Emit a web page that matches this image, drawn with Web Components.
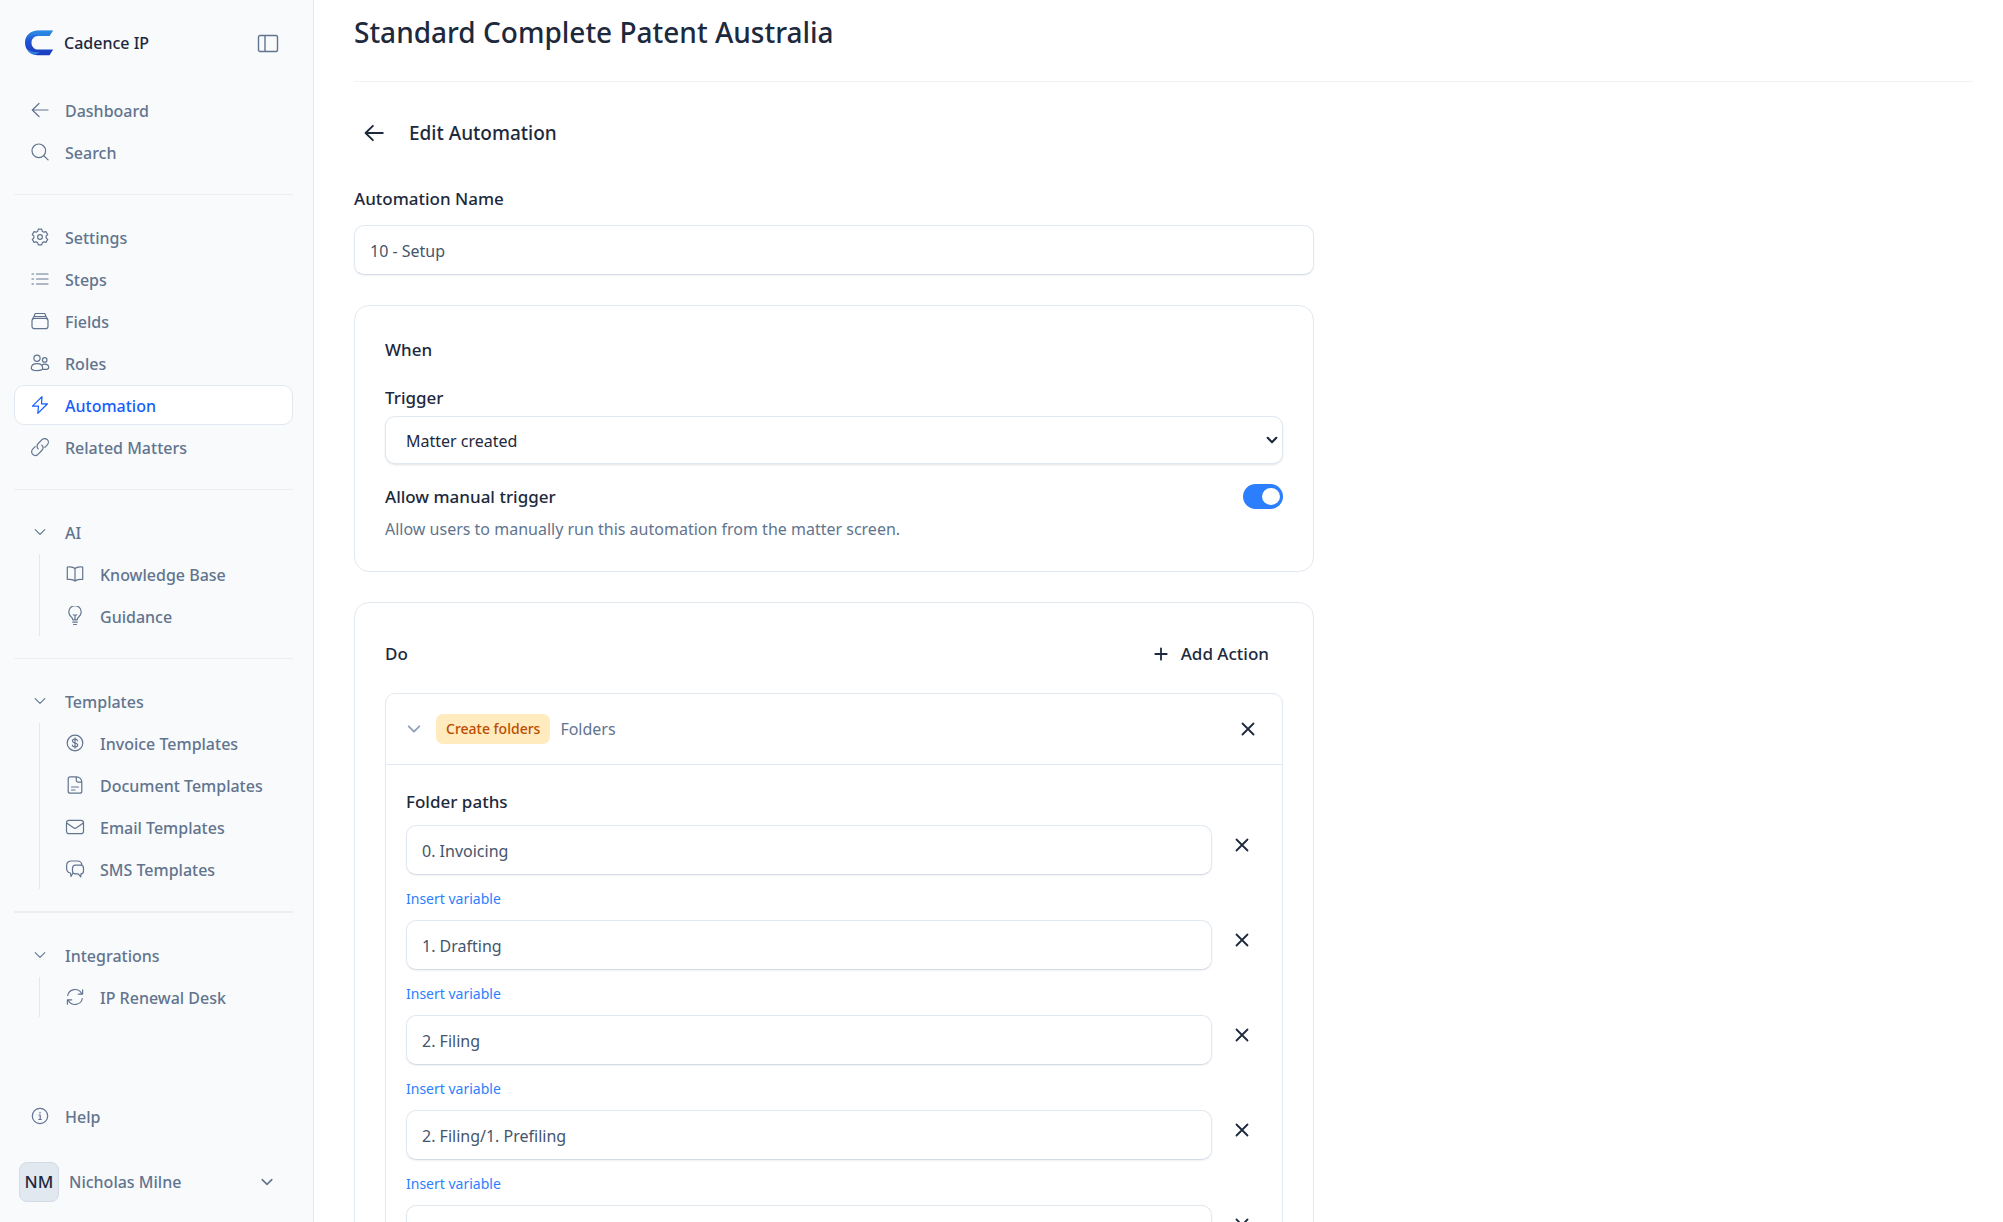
<!DOCTYPE html>
<html lang="en">
<head>
<meta charset="utf-8">
<meta name="viewport" content="width=device-width, initial-scale=1">
<title>Cadence IP</title>
<style>
  html, body { height: 100%; }
  body {
    margin: 0;
    overflow: hidden;
    font: 400 16px/24px "Noto Sans", "Open Sans", sans-serif;
    color: #1d293d;
    background: #fff;
    --line: #e2e8f0;
    --muted: #62748e;
    --blue: #155dfc;
  }
</style>
</head>
<body>
<app-shell>
  <side-bar slot="nav">
    <nav-group>
      <nav-item icon="left">Dashboard</nav-item>
      <nav-item icon="search">Search</nav-item>
    </nav-group>
    <nav-group>
      <nav-item icon="gear">Settings</nav-item>
      <nav-item icon="list">Steps</nav-item>
      <nav-item icon="stack">Fields</nav-item>
      <nav-item icon="users">Roles</nav-item>
      <nav-item icon="bolt" active>Automation</nav-item>
      <nav-item icon="link">Related Matters</nav-item>
    </nav-group>
    <nav-group label="AI">
      <nav-item icon="book">Knowledge Base</nav-item>
      <nav-item icon="bulb">Guidance</nav-item>
    </nav-group>
    <nav-group label="Templates">
      <nav-item icon="dollar">Invoice Templates</nav-item>
      <nav-item icon="doc">Document Templates</nav-item>
      <nav-item icon="mail">Email Templates</nav-item>
      <nav-item icon="chat">SMS Templates</nav-item>
    </nav-group>
    <nav-group label="Integrations" thick>
      <nav-item icon="sync">IP Renewal Desk</nav-item>
    </nav-group>
    <nav-item slot="foot" icon="info">Help</nav-item>
    <user-menu slot="foot" initials="NM">Nicholas Milne</user-menu>
  </side-bar>

  <page-header>Standard Complete Patent Australia</page-header>
  <automation-form>
    <text-field label="Automation Name" value="10 - Setup"></text-field>
    <trigger-card></trigger-card>
    <actions-card>
      <action-panel kind="Create folders" name="Folders">
        <folder-path value="0. Invoicing"></folder-path>
        <folder-path value="1. Drafting"></folder-path>
        <folder-path value="2. Filing"></folder-path>
        <folder-path value="2. Filing/1. Prefiling"></folder-path>
        <folder-path value=""></folder-path>
      </action-panel>
    </actions-card>
  </automation-form>
</app-shell>

<script>
const ICONS = {
  left: '<path d="M18 10H2.5M9 3.5 2.3 10 9 16.5"/>',
  search: '<circle cx="8.8" cy="8.8" r="6.8"/><path d="m13.7 13.7 4.4 4.2"/>',
  gear: '<circle cx="10" cy="10" r="2.4"/><path d="M8.3 2.2h3.4l.6 2.1 1.5.9 2.1-.6 1.8 2.9-1.6 1.6v1.8l1.6 1.6-1.8 2.9-2.1-.6-1.5.9-.6 2.1H8.3l-.6-2.1-1.5-.9-2.1.6-1.8-2.9 1.6-1.6V9.1L2.3 7.5l1.8-2.9 2.1.6 1.5-.9z"/>',
  list: '<path d="M6.5 5H18M6.5 10H18M6.5 15H18"/><path d="M2 5h1.500M2 10h1.500M2 15h1.500"/>',
  stack: '<rect x="2" y="7.300" width="16" height="10.400" rx="2.500"/><path d="M2.500 8 4 5.500h12L17.500 8M4 5.500 5.200 2.500h9.600L16 5.500"/>',
  users: '<circle cx="7" cy="5.300" r="3.100"/><circle cx="14.700" cy="6.900" r="2.300"/><path d="M1.300 15.300c0-3 2.400-4.600 5.700-4.600s5.700 1.600 5.700 4.600c0 1.500-2.600 2.300-5.700 2.300s-5.700-.8-5.700-2.300ZM12 11.900c.7-.5 1.600-.7 2.700-.7 2.300 0 4 1.200 4 3.200 0 1.300-1.800 2-4 2-.8 0-1.500-.1-2.100-.2"/>',
  bolt: '<path d="M12 1.600 2.500 11.200h6L7.800 18.400l9.700-9.600h-6z"/>',
  link: '<path d="M8.200 11.900c-1.600-1.600-1.500-3.900 0-5.400l3.800-3.800c1.600-1.600 3.900-1.500 5.300-.1s1.500 3.700 0 5.200l-2.500 2.500M11.800 8.100c1.600 1.600 1.500 3.900 0 5.400L8 17.300c-1.600 1.600-3.900 1.500-5.300.1s-1.500-3.700 0-5.200l2.500-2.500"/>',
  book: '<path d="M10 4.500C8.500 3 5.500 2.500 2.300 3v12.500c3.200-.5 6.200 0 7.700 1.500 1.500-1.500 4.500-2 7.700-1.500V3C14.500 2.500 11.500 3 10 4.500ZM10 4.500V17"/>',
  bulb: '<path d="M7.800 13.800c0-1.300-.7-2-1.800-3.100a6.200 6.200 0 1 1 8 0c-1.100 1.100-1.800 1.800-1.800 3.100zM10 13.500V9M8.300 8.800 10 9.500l1.700-.7M7.800 16.200h4.400M8.600 18.500h2.800"/>',
  dollar: '<circle cx="10" cy="10" r="7.800"/><path d="M12.600 7.800c-.3-1-1.300-1.600-2.600-1.600-1.500 0-2.600.7-2.600 1.900 0 2.700 5.300 1.200 5.300 3.900 0 1.200-1.200 1.900-2.700 1.900-1.400 0-2.500-.6-2.700-1.700M10 4.800v10.400"/>',
  doc: '<path d="M11.500 1.800H5.200c-1.200 0-2 .8-2 2v12.400c0 1.200.8 2 2 2h9.600c1.200 0 2-.8 2-2V7.100c0-3-2.300-5.300-5.300-5.300ZM11.300 1.900v3.300c0 1.200.8 2 2 2h3.300M6.500 12h7M6.500 15h3.500"/>',
  mail: '<rect x="1.500" y="3.300" width="17" height="13.400" rx="2.500"/><path d="m2 6.300 6.500 4.500c.9.600 2.100.6 3 0L18 6.300"/>',
  chat: '<path d="M7.800 14.300 6 17.500 5.500 14C3 13.800 1.600 12.200 1.600 9V7c0-3.300 1.600-5 4.800-5h5.800c2.800 0 4.500 1.300 4.700 4M10.500 6.200h5c2 0 3 1 3 3v2.700c0 1.800-.8 2.800-2.500 3l-.3 3-2.500-3h-2.700c-2 0-3-1-3-3V9.200c0-2 1-3 3-3Z"/>',
  sync: '<path d="M2.700 8.500A7.500 7.500 0 0 1 16.500 6.200M17.600 2.800v4.300h-4.300M17.300 11.500A7.500 7.500 0 0 1 3.500 13.800M2.400 17.200v-4.300h4.300"/>',
  info: '<circle cx="10" cy="10" r="7.700"/><path d="M9 9h1.200v4.500M8.800 13.500h2.500M10 6.300v.6"/>',
  down: '<path d="m5.200 7.600 4.800 4.800 4.800-4.800"/>',
  panel: '<rect x="1.500" y="1.500" width="19" height="16" rx="1.500"/><path d="M8 1.500v16"/>',
  cross: '<path d="m4.500 4.500 11 11M15.500 4.500l-11 11"/>',
  plus: '<path d="M10 4.300v11.400M4.300 10h11.400"/>'
};
const icon = (name, size = 20, width = 1.2) =>
  `<svg aria-hidden="true" width="${size}" height="${size}" viewBox="0 0 20 20" fill="none" stroke="currentColor" stroke-width="${width}" stroke-linecap="round" stroke-linejoin="round">${ICONS[name]}</svg>`;

const BASE = `
  :host, *, *::before, :host::before { box-sizing: border-box; }
  :host { display: block; }
  svg { display: block; flex: none; }
  h1, h2, h3, p { margin: 0; }
  button, input, select { font: inherit; color: inherit; margin: 0; }
  button { border: 0; padding: 0; background: none; cursor: pointer; }
  a { color: inherit; text-decoration: none; }
`;
const FIELD = `
  label, .label { display: block; font-size: 17px; font-weight: 500; }
  input[type=text] {
    display: block; width: 100%; min-width: 0; height: 50px; padding: 2px 15px 0;
    border: 1px solid var(--line); border-bottom-color: #d3dce8; border-radius: 10px;
    background: #fff; color: #45556c; box-shadow: 0 1px 2px rgb(15 23 42 / .06);
  }
`;

class Base extends HTMLElement {
  connectedCallback() {
    if (this.shadowRoot) return;
    this.attachShadow({ mode: 'open' }).innerHTML =
      `<style>${BASE}${this.css || ''}</style>${this.html}`;
  }
}

customElements.define('app-shell', class extends Base {
  css = `
    :host { display: flex; height: 100vh; overflow: hidden; }
    aside { flex: none; width: 314px; border-right: 1px solid var(--line); background: #f8fafc; }
    main { flex: 1; min-width: 0; overflow: hidden; padding: 9px 30px 0 40px; }
  `;
  html = `<aside><slot name="nav"></slot></aside><main><slot></slot></main>`;
});

customElements.define('side-bar', class extends Base {
  css = `
    :host { display: flex; flex-direction: column; height: 100%; padding: 23px 20px 20px 14px; }
    header { display: flex; align-items: center; gap: 10px; height: 40px; margin-bottom: 27px; padding: 0 14px 0 10px; font-weight: 500; }
    header span { flex: 1; }
    header button { color: var(--muted); }
    nav { flex: 1; }
    footer { display: flex; flex-direction: column; gap: 26px; }
  `;
  html = `
    <header>
      <svg width="30" height="26" viewBox="0 0 30 26" aria-hidden="true">
        <defs>
          <linearGradient id="a" x1="0" y1="0" x2="0" y2="1"><stop offset="0" stop-color="#2b7fe0"/><stop offset=".5" stop-color="#1d4fd2"/><stop offset="1" stop-color="#1a3cbf"/></linearGradient>
        </defs>
        <path d="M29 .5H14C6.500.5 1 5.500 1 12.700S6.500 25.200 14 25.200h11.500l3.700-5.700H14c-3.800 0-6.500-3-6.500-6.800S10.200 6 14 6h11.500z" fill="url(#a)"/>
        <path d="M12 .8C8 2 5 4.500 3 8.500 6.500 4.500 11 4 15 6h-1 11.500L29 .5z" fill="#2a93e8" opacity=".5"/>
        <path d="M3 18.500c3 3 8 4 13 3.500l-5 3C7.500 24.500 4.500 22.500 3 18.500Z" fill="#3b9cf0" opacity=".65"/>
      </svg>
      <span>Cadence IP</span>
      <button type="button" aria-label="Toggle sidebar"><svg width="22" height="19" viewBox="0 0 22 19" fill="none" stroke="currentColor" stroke-width="1.4" aria-hidden="true">${ICONS.panel}</svg></button>
    </header>
    <nav><slot></slot></nav>
    <footer><slot name="foot"></slot></footer>`;
});

customElements.define('nav-group', class extends Base {
  get css() { return `
    :host { display: flex; flex-direction: column; gap: 2px; color: var(--muted); font-weight: 500; }
    :host(:not(:first-child))::before { content: ""; height: ${this.hasAttribute('thick') ? 2 : 1}px; margin: 22px 0 20px; background: #ebeef2; }
    button { display: flex; align-items: center; gap: 15px; height: 40px; padding: 0 16px; text-align: left; }
    button span { padding-top: 2px; }
    .items { display: flex; flex-direction: column; gap: 2px; }
    .sub { margin-left: 25px; border-left: 1px solid var(--line); --indent: 24px; }
  `; }
  get html() {
    const label = this.getAttribute('label');
    return label
      ? `<button type="button" aria-expanded="true">${icon('down', 20, 1.1)}<span>${label}</span></button><div class="items sub"><slot></slot></div>`
      : `<div class="items"><slot></slot></div>`;
  }
});

customElements.define('nav-item', class extends Base {
  css = `
    a { display: flex; align-items: center; gap: 15px; height: 40px; padding: 0 8px 0 var(--indent, 15px); border: 1px solid transparent; border-radius: 10px; color: var(--muted); font-weight: 500; white-space: nowrap; }
    a span { padding-top: 2px; }
    :host([active]) a { border-color: var(--line); background: #fff; color: var(--blue); }
  `;
  get html() { return `<a href="#"${this.hasAttribute('active') ? ' aria-current="page"' : ''}>${icon(this.getAttribute('icon'))}<span><slot></slot></span></a>`; }
});

customElements.define('user-menu', class extends Base {
  css = `
    button { display: flex; align-items: center; gap: 10px; width: 100%; padding: 0 16px 0 5px; color: var(--muted); font-weight: 500; text-align: left; }
    .avatar { display: grid; place-items: center; width: 40px; height: 40px; border: 1px solid #d3dbe5; border-radius: 8px; background: #e2e8f0; color: #1d293d; font-size: 17px; }
    .name { flex: 1; }
  `;
  get html() { return `<button type="button"><span class="avatar">${this.getAttribute('initials')}</span><span class="name"><slot></slot></span>${icon('down', 20, 1.6)}</button>`; }
});

customElements.define('page-header', class extends Base {
  css = `
    :host { padding-bottom: 25px; border-bottom: 1px solid #f1f3f6; }
    h1 { font-size: 28px; line-height: 47px; font-weight: 500; }
  `;
  html = `<h1><slot></slot></h1>`;
});

customElements.define('automation-form', class extends Base {
  css = `
    :host { max-width: 960px; padding-top: 31px; }
    header { display: flex; align-items: center; gap: 15px; height: 40px; margin-bottom: 34px; }
    header button { display: grid; place-items: center; width: 40px; height: 40px; }
    h2 { font-size: 19px; font-weight: 500; }
    .fields { display: flex; flex-direction: column; gap: 30px; }
  `;
  html = `<header><button type="button" aria-label="Back">${icon('left', 22, 1.7)}</button><h2>Edit Automation</h2></header><div class="fields"><slot></slot></div>`;
});

customElements.define('text-field', class extends Base {
  css = FIELD + `label { margin-bottom: 14px; }`;
  get html() { return `<label for="f">${this.getAttribute('label')}</label><input id="f" type="text" value="${this.getAttribute('value')}">`; }
});

const CARD = `:host { padding: 31px 30px 30px; border: 1px solid var(--line); border-radius: 15px; } h3 { font-size: 17px; font-weight: 500; }`;

customElements.define('trigger-card', class extends Base {
  css = FIELD + CARD + `
    h3 { margin: 1px 0 24px; }
    .label { margin-bottom: 6px; }
    .select { display: grid; align-items: center; }
    .select > * { grid-area: 1 / 1; }
    .select svg { justify-self: end; margin-right: 2px; pointer-events: none; }
    select { appearance: none; width: 100%; height: 48px; padding: 2px 20px 0; border: 1px solid var(--line); border-radius: 10px; background: #fff; box-shadow: 0 1px 2px rgb(15 23 42 / .12); }
    .row { display: flex; justify-content: space-between; align-items: center; margin: 19px 0 8px; }
    .row label { margin-top: 2px; }
    input { appearance: none; flex: none; width: 40px; height: 25px; padding: 4px; border-radius: 13px; background: #2b7fff; }
    input::before { content: ""; display: block; width: 18px; height: 17px; margin-left: 15px; border-radius: 50%; background: #fff; }
    p { color: var(--muted); }
  `;
  html = `
    <h3>When</h3>
    <label class="label" for="t">Trigger</label>
    <div class="select"><select id="t"><option>Matter created</option></select>${icon('down', 18, 2.4)}</div>
    <div class="row"><label for="m">Allow manual trigger</label><input id="m" type="checkbox" role="switch" checked></div>
    <p>Allow users to manually run this automation from the matter screen.</p>`;
});

customElements.define('actions-card', class extends Base {
  css = CARD + `
    header { display: flex; align-items: center; justify-content: space-between; height: 40px; margin-bottom: 19px; }
    button { display: flex; align-items: center; gap: 10px; height: 40px; padding: 0 14px; font-size: 17px; font-weight: 500; }
  `;
  html = `<header><h3>Do</h3><button type="button">${icon('plus', 20, 1.8)}Add Action</button></header><slot></slot>`;
});

customElements.define('action-panel', class extends Base {
  css = `
    :host { border: 1px solid var(--line); border-radius: 10px; }
    header { display: flex; align-items: center; gap: 10px; height: 71px; padding: 0 14px 0 17px; border-bottom: 1px solid var(--line); color: var(--muted); }
    .tag { padding: 3px 10px; border-radius: 7px; background: #ffebbd; color: #bb4d00; font-size: 14px; font-weight: 500; }
    .name { flex: 1; }
    .toggle { margin-right: 1px; color: #90a1b9; }
    .close { display: grid; place-items: center; width: 40px; height: 40px; color: #1d293d; }
    .body { padding: 25px 20px; }
    h3 { margin-bottom: 11px; font-size: 17px; font-weight: 500; }
    .list { display: flex; flex-direction: column; gap: 9px; }
  `;
  get html() { return `
    <header>
      <button class="toggle" type="button" aria-label="Collapse">${icon('down', 22, 1.7)}</button>
      <span class="tag">${this.getAttribute('kind')}</span><span class="name">${this.getAttribute('name')}</span>
      <button class="close" type="button" aria-label="Remove action">${icon('cross', 20, 1.8)}</button>
    </header>
    <div class="body"><h3>Folder paths</h3><div class="list"><slot></slot></div></div>`; }
});

customElements.define('folder-path', class extends Base {
  css = FIELD + `
    :host { display: flex; align-items: flex-start; gap: 10px; }
    .field { flex: 1; min-width: 0; }
    .insert { display: block; margin-top: 12px; color: #2b7fff; font-size: 14px; }
    .remove { display: grid; place-items: center; width: 40px; height: 40px; }
  `;
  get html() { return `
    <div class="field"><input type="text" aria-label="Folder path" value="${this.getAttribute('value')}"><button class="insert" type="button">Insert variable</button></div>
    <button class="remove" type="button" aria-label="Remove path">${icon('cross', 20, 1.8)}</button>`; }
});
</script>
</body>
</html>
